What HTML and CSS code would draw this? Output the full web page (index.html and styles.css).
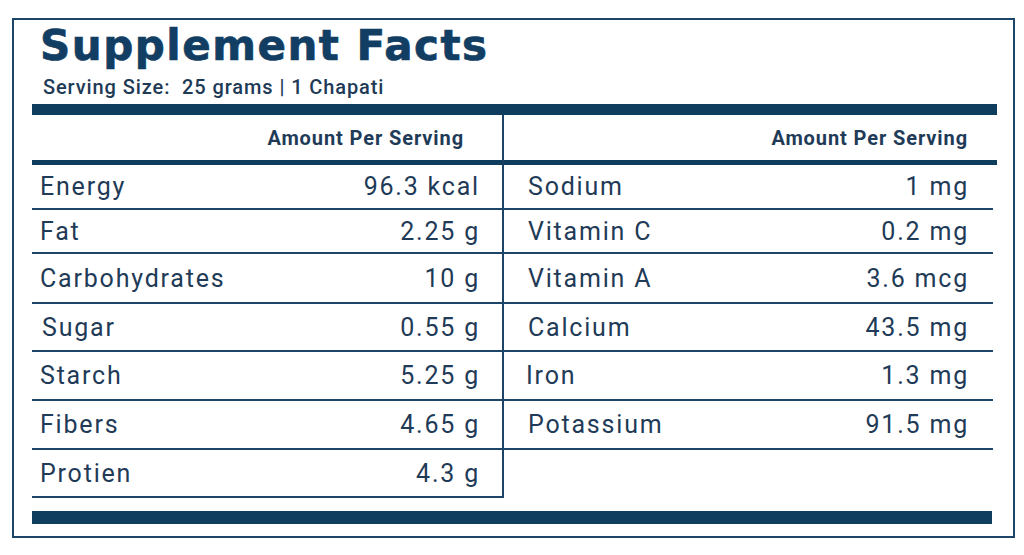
FILE: index.html
```html
<!DOCTYPE html>
<html lang="en">
<head>
<meta charset="utf-8">
<title>Supplement Facts</title>
<link rel="stylesheet" href="styles.css">
</head>
<body>
<div class="card">
  <h1 class="title">Supplement Facts</h1>
  <div class="serving">Serving Size:  25 grams | 1 Chapati</div>
  <div class="bar bar-top"></div>
  <div class="facts">
    <div class="cell head left">Amount Per Serving</div>
    <div class="cell head right">Amount Per Serving</div>

    <div class="cell left"><span>Energy</span><span>96.3 kcal</span></div>
    <div class="cell right"><span>Sodium</span><span>1 mg</span></div>

    <div class="cell left"><span>Fat</span><span>2.25 g</span></div>
    <div class="cell right"><span>Vitamin C</span><span>0.2 mg</span></div>

    <div class="cell left"><span>Carbohydrates</span><span>10 g</span></div>
    <div class="cell right"><span>Vitamin A</span><span>3.6 mcg</span></div>

    <div class="cell left"><span class="nudge">Sugar</span><span>0.55 g</span></div>
    <div class="cell right"><span>Calcium</span><span>43.5 mg</span></div>

    <div class="cell left"><span>Starch</span><span>5.25 g</span></div>
    <div class="cell right"><span class="pull">Iron</span><span>1.3 mg</span></div>

    <div class="cell left"><span>Fibers</span><span>4.65 g</span></div>
    <div class="cell right"><span>Potassium</span><span>91.5 mg</span></div>

    <div class="cell left"><span>Protien</span><span>4.3 g</span></div>
    <div class="cell right empty"></div>
  </div>
  <div class="bar bar-bottom"></div>
</div>
</body>
</html>
```

FILE: styles.css
```css
html, body {
  margin: 0;
  padding: 0;
  background: #ffffff;
}

.card {
  box-sizing: border-box;
  margin: 18px 0 0 12px;
  width: 1003px;
  height: 520px;
  border: 2px solid #1d4567;
  padding: 0 16px 0 18px;
  color: #1f3b57;
  font-family: Roboto, "Liberation Sans", sans-serif;
}

.title {
  margin: 0;
  padding: 4px 0 0 8px;
  font-family: "DejaVu Sans", sans-serif;
  font-weight: 700;
  font-size: 42px;
  line-height: 44px;
  letter-spacing: 1.5px;
  color: #123e63;
  -webkit-text-stroke: 0.7px #123e63;
}

.serving {
  white-space: pre;
  padding-left: 11px;
  margin-top: 7px;
  font-size: 20px;
  font-weight: 500;
  line-height: 24px;
  letter-spacing: 0.9px;
  color: #1e3a56;
}

.bar {
  background: #0f3d5e;
}

.bar-top {
  margin-top: 5px;
  height: 11px;
}

.bar-bottom {
  margin-top: 13px;
  height: 13px;
  width: 960px;
}

.facts {
  display: grid;
  grid-template-columns: 472px 493px;
  grid-template-rows: 50px 45px 44px 50px 48px 49px 49px 48px;
}

.cell {
  box-sizing: border-box;
  display: flex;
  justify-content: space-between;
  align-items: center;
  border-bottom: 2px solid #1d4567;
  font-size: 25px;
  letter-spacing: 1.8px;
}

.cell.left {
  border-right: 2px solid #1d4567;
  padding: 0 22px 0 8px;
}

.cell.right {
  margin-right: 4px;
  padding: 0 24px 0 24px;
}

.cell.head {
  justify-content: flex-end;
  border-bottom: 5px solid #0f3d5e;
  font-size: 20px;
  font-weight: 700;
  letter-spacing: 0.9px;
}

.cell.head.left {
  padding-right: 38px;
}

.cell.head.right {
  margin-right: 0;
  padding-right: 29px;
}

.cell.empty {
  border-bottom: none;
}

.nudge {
  margin-left: 2px;
}

.pull {
  margin-left: -2px;
}
```
